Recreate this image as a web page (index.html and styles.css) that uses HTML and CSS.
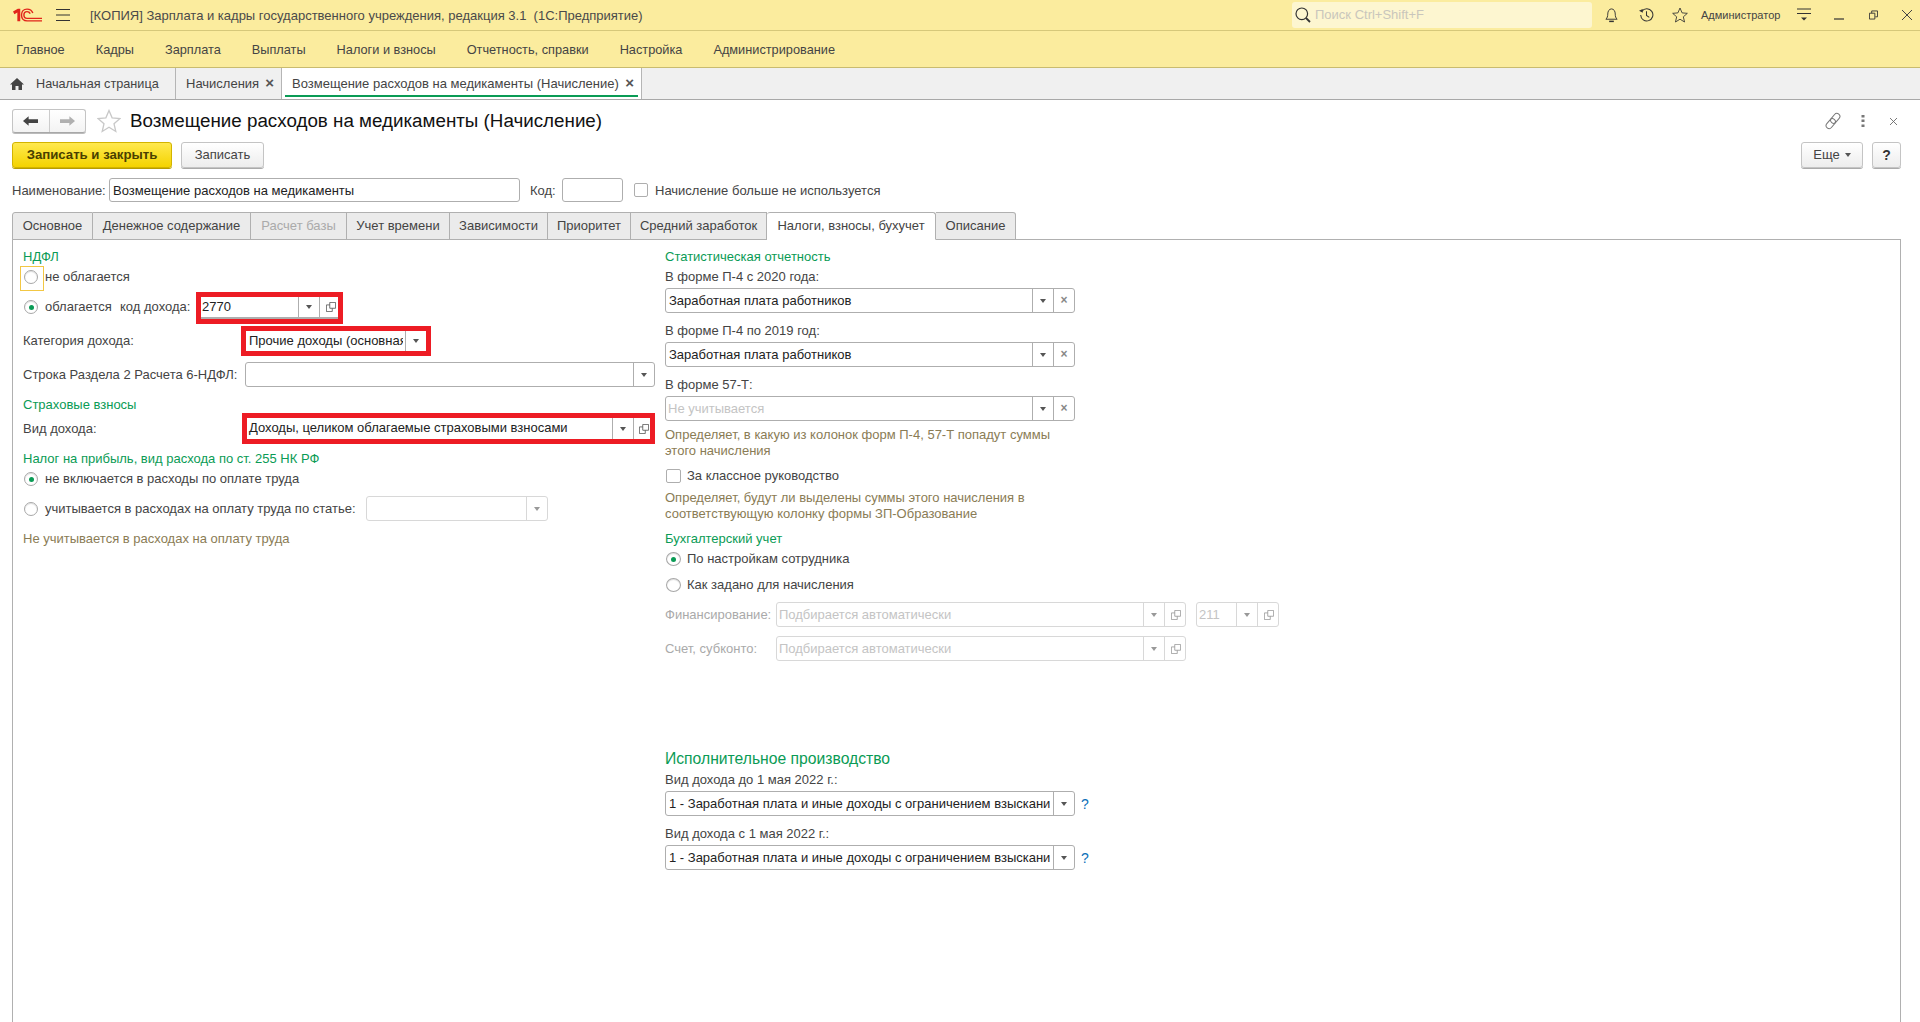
FILE: index.html
```html
<!DOCTYPE html>
<html lang="ru">
<head>
<meta charset="utf-8">
<title>Возмещение расходов на медикаменты</title>
<link rel="stylesheet" href="styles.css">
</head>
<body>
<svg class="defs" aria-hidden="true">
  <symbol id="i-open" viewBox="0 0 12 12"><path d="M4.500 .5h7v7h-7zM4.500 3.500h-4v8h7v-4" fill="none" stroke="currentColor"/></symbol>
  <symbol id="i-star" viewBox="0 0 24 24"><path d="M12 1.500l3.100 7.300 7.900.7-6 5.200 1.800 7.800L12 18.300 5.200 22.500l1.800-7.800-6-5.200 7.900-.7z" fill="none" stroke="currentColor" stroke-width="1.300"/></symbol>
</svg>
<div class="app">
  <header class="titlebar">
    <svg class="logo" viewBox="0 0 30 14"><path d="M0 3.500L5 .5h2.500V13.500H4.500V4.500L1.500 6.300z" fill="#e1251b"/><path d="M20.500 5C19.500 2.300 17 .9 14.500 .9 11 .9 8.800 3.600 8.800 7s2.200 6.100 5.700 6.100H30M17.800 5.600C17.200 4.300 16 3.500 14.500 3.500 12.500 3.500 11.300 5 11.300 7s1.200 3.500 3.200 3.500H30" fill="none" stroke="#e1251b" stroke-width="1.500"/></svg>
    <svg class="burger" viewBox="0 0 14 12"><path d="M0 .5h14M0 6h14M0 11.500h14" stroke="#333" fill="none"/></svg>
    <div class="app-title">[КОПИЯ] Зарплата и кадры государственного учреждения, редакция 3.1&nbsp; (1С:Предприятие)</div>
    <div class="search">
      <svg class="search-ico" viewBox="0 0 16 16"><circle cx="6.800" cy="6.800" r="5.800" fill="none" stroke="#333" stroke-width="1.200"/><path d="M11 11l4 4" stroke="#333" stroke-width="1.800"/></svg>
      <span>Поиск Ctrl+Shift+F</span>
    </div>
    <svg class="top-ico bell" viewBox="0 0 16 16"><path d="M2 12.500h12c-1.500-1.500-2-3-2-5.500 0-3-1.500-5.500-4-5.500S4 4 4 7c0 2.500-.5 4-2 5.500z" fill="none" stroke="#333"/><path d="M5.500 14.800h5" stroke="#333" stroke-width="1.600"/></svg>
    <svg class="top-ico hist" viewBox="0 0 16 16"><path d="M3.200 3.800A6.500 6.500 0 1 1 1.800 8" fill="none" stroke="#333" stroke-width="1.100"/><path d="M0 3.500L4 1.500 4 5.500z" fill="#333"/><path d="M8 4v4.500l3 2" fill="none" stroke="#333" stroke-width="1.100"/></svg>
    <svg class="top-ico star"><use href="#i-star"/></svg>
    <div class="user">Администратор</div>
    <svg class="win-menu" viewBox="0 0 14 14"><path d="M0 1h14M0 5.500h14" stroke="#333"/><path d="M4 9.500h6l-3 3z" fill="#333"/></svg>
    <svg class="win-min" viewBox="0 0 10 10"><path d="M0 9h10" stroke="#333" stroke-width="1.200"/></svg>
    <svg class="win-rest" viewBox="0 0 10 10"><path d="M.5 3h6v6.500h-6zM3 3V.5h6.500v6.500H7" fill="none" stroke="#333"/></svg>
    <svg class="win-close" viewBox="0 0 10 10"><path d="M0 0l10 10M10 0L0 10" stroke="#444" stroke-width="1"/></svg>
  </header>
  <nav class="menu">
    <span>Главное</span><span>Кадры</span><span>Зарплата</span><span>Выплаты</span><span>Налоги и взносы</span><span>Отчетность, справки</span><span>Настройка</span><span>Администрирование</span>
  </nav>
  <div class="opentabs">
    <div class="otab home"><svg class="house" viewBox="0 0 14 12"><path d="M7 0L0 6.500h2V12h3.500V8h3v4H12V6.500h2z" fill="#444"/></svg><span>Начальная страница</span></div>
    <div class="otab list"><span>Начисления</span><b class="otab-x">×</b></div>
    <div class="otab current"><span>Возмещение расходов на медикаменты (Начисление)</span><b class="otab-x">×</b></div>
  </div>
  <main class="form">
    <div class="form-head">
      <div class="navgroup">
        <div class="nav-btn"><svg viewBox="0 0 16 10"><path d="M0 5l6-5v3h10v4H6v3z" fill="#444"/></svg></div>
        <div class="nav-btn"><svg viewBox="0 0 16 10"><path d="M16 5l-6-5v3H0v4h10v3z" fill="#b0b0b0"/></svg></div>
      </div>
      <svg class="fav"><use href="#i-star"/></svg>
      <h1>Возмещение расходов на медикаменты (Начисление)</h1>
      <svg class="head-ico link" viewBox="0 0 18 18"><g transform="rotate(-50 9 9)" fill="none" stroke="#777"><rect x="0" y="6" width="11" height="6" rx="3"/><rect x="7" y="6" width="11" height="6" rx="3"/></g></svg>
      <svg class="head-ico dots" viewBox="0 0 4 14"><path d="M.5 1h3v2.500h-3zM.5 5.500h3V8h-3zM.5 10.500h3V13h-3z" fill="#777"/></svg>
      <svg class="head-ico cross" viewBox="0 0 8 8"><path d="M0 0l8 8M8 0L0 8" stroke="#666"/></svg>
    </div>
    <div class="toolbar">
      <button class="btn primary">Записать и закрыть</button>
      <button class="btn save">Записать</button>
      <button class="btn more">Еще<i class="caret"></i></button>
      <button class="btn help">?</button>
    </div>
    <div class="namerow">
      <span class="lbl l-name">Наименование:</span>
      <div class="field f-name"><div class="val">Возмещение расходов на медикаменты</div></div>
      <span class="lbl l-code">Код:</span>
      <div class="field f-code"><div class="val"></div></div>
      <span class="check"></span>
      <span class="lbl">Начисление больше не используется</span>
    </div>
    <div class="tabs">
      <div class="tab t1">Основное</div>
      <div class="tab t2">Денежное содержание</div>
      <div class="tab t3 off">Расчет базы</div>
      <div class="tab t4">Учет времени</div>
      <div class="tab t5">Зависимости</div>
      <div class="tab t6">Приоритет</div>
      <div class="tab t7">Средний заработок</div>
      <div class="tab t8 on">Налоги, взносы, бухучет</div>
      <div class="tab t9">Описание</div>
    </div>
    <section class="panel">
      <div class="col-left">
        <div class="head">НДФЛ</div>
        <div class="row r-no"><span class="radio focus"></span><span class="lbl">не облагается</span></div>
        <div class="row r-yes">
          <span class="radio sel"></span><span class="lbl l-obl">облагается</span><span class="lbl l-kod">код дохода:</span>
          <div class="redbox rb1"><div class="field plain underline"><div class="val v0">2770</div><div class="fbtn"><i class="caret"></i></div><div class="fbtn"><svg class="open"><use href="#i-open"/></svg></div></div></div>
        </div>
        <div class="row r-cat">
          <span class="lbl l-cat">Категория дохода:</span>
          <div class="redbox rb2"><div class="field plain"><div class="val v1">Прочие доходы (основная налоговая база)</div><div class="fbtn"><i class="caret"></i></div></div></div>
        </div>
        <div class="row r-str">
          <span class="lbl l-str">Строка Раздела 2 Расчета 6-НДФЛ:</span>
          <div class="field f-str"><div class="val"></div><div class="fbtn"><i class="caret"></i></div></div>
        </div>
        <div class="head h-ins">Страховые взносы</div>
        <div class="row r-vid">
          <span class="lbl l-vid">Вид дохода:</span>
          <div class="redbox rb3"><div class="field plain"><div class="val v1">Доходы, целиком облагаемые страховыми взносами</div><div class="fbtn"><i class="caret"></i></div><div class="fbtn"><svg class="open"><use href="#i-open"/></svg></div></div></div>
        </div>
        <div class="head h-tax">Налог на прибыль, вид расхода по ст. 255 НК РФ</div>
        <div class="row r-inc"><span class="radio sel"></span><span class="lbl">не включается в расходы по оплате труда</span></div>
        <div class="row r-art">
          <span class="radio"></span><span class="lbl l-art">учитывается в расходах на оплату труда по статье:</span>
          <div class="field dis f-art"><div class="val"></div><div class="fbtn"><i class="caret"></i></div></div>
        </div>
        <div class="hint h-note">Не учитывается в расходах на оплату труда</div>
      </div>
      <div class="col-right">
        <div class="head">Статистическая отчетность</div>
        <div class="flabel first">В форме П-4 с 2020 года:</div>
        <div class="field wide"><div class="val">Заработная плата работников</div><div class="fbtn"><i class="caret"></i></div><div class="fbtn x">×</div></div>
        <div class="flabel">В форме П-4 по 2019 год:</div>
        <div class="field wide"><div class="val">Заработная плата работников</div><div class="fbtn"><i class="caret"></i></div><div class="fbtn x">×</div></div>
        <div class="flabel">В форме 57-Т:</div>
        <div class="field wide"><div class="val ph">Не учитывается</div><div class="fbtn"><i class="caret"></i></div><div class="fbtn x">×</div></div>
        <div class="hint h1">Определяет, в какую из колонок форм П-4, 57-Т попадут суммы<br>этого начисления</div>
        <div class="row r-class"><span class="check c2"></span><span class="lbl">За классное руководство</span></div>
        <div class="hint h2">Определяет, будут ли выделены суммы этого начисления в<br>соответствующую колонку формы ЗП-Образование</div>
        <div class="head h-acc">Бухгалтерский учет</div>
        <div class="row r-acc1"><span class="radio r2 sel"></span><span class="lbl">По настройкам сотрудника</span></div>
        <div class="row r-acc2"><span class="radio r2"></span><span class="lbl">Как задано для начисления</span></div>
        <div class="row r-fin">
          <span class="lbl off l-fin">Финансирование:</span>
          <div class="field dis f-fin"><div class="val ph">Подбирается автоматически</div><div class="fbtn"><i class="caret"></i></div><div class="fbtn"><svg class="open"><use href="#i-open"/></svg></div></div>
          <div class="field dis f-211"><div class="val ph">211</div><div class="fbtn"><i class="caret"></i></div><div class="fbtn"><svg class="open"><use href="#i-open"/></svg></div></div>
        </div>
        <div class="row r-sch">
          <span class="lbl off l-fin">Счет, субконто:</span>
          <div class="field dis f-fin"><div class="val ph">Подбирается автоматически</div><div class="fbtn"><i class="caret"></i></div><div class="fbtn"><svg class="open"><use href="#i-open"/></svg></div></div>
        </div>
        <div class="bighead">Исполнительное производство</div>
        <div class="flabel after-big">Вид дохода до 1 мая 2022 г.:</div>
        <div class="row r-q">
          <div class="field wide"><div class="val v2">1 - Заработная плата и иные доходы с ограничением взыскания</div><div class="fbtn"><i class="caret"></i></div></div>
          <span class="q">?</span>
        </div>
        <div class="flabel">Вид дохода с 1 мая 2022 г.:</div>
        <div class="row r-q">
          <div class="field wide"><div class="val v2">1 - Заработная плата и иные доходы с ограничением взыскания</div><div class="fbtn"><i class="caret"></i></div></div>
          <span class="q">?</span>
        </div>
      </div>
    </section>
  </main>
</div>
</body>
</html>
```

FILE: styles.css
```css
* { box-sizing: border-box; }
html, body { margin: 0; height: 100%; overflow: hidden; background: #fff; }
body { font: 13px/16px "Liberation Sans", Arial, sans-serif; color: #444; }
.defs { position: absolute; width: 0; height: 0; }
.app { display: flex; flex-direction: column; height: 1022px; }

.titlebar { flex: none; height: 31px; display: flex; align-items: center; background: #fbec9e; border-bottom: 1px solid #d6c87a; }
.logo { width: 29px; height: 14px; margin-left: 13px; flex: none; }
.burger { width: 14px; height: 12px; margin-left: 14px; flex: none; }
.app-title { margin-left: 20px; padding-top: 2px; color: #4a4a4a; white-space: nowrap; flex: none; width: 1202px; }
.search { width: 300px; height: 26px; flex: none; background: #fdf6d0; border-radius: 3px; display: flex; align-items: center; color: #c9c6bc; }
.search-ico { width: 16px; height: 16px; margin: 0 4px 0 3px; }
.top-ico { flex: none; width: 15px; height: 16px; color: #333; }
.bell { margin-left: 12px; }
.hist { margin-left: 20px; }
.star { margin-left: 18px; width: 16px; }
.user { margin-left: 13px; font-size: 11px; color: #444; flex: none; width: 84px; white-space: nowrap; }
.win-menu { width: 14px; height: 14px; margin-left: 12px; flex: none; }
.win-min { width: 10px; height: 10px; margin-left: 23px; flex: none; }
.win-rest { width: 9px; height: 10px; margin-left: 25px; flex: none; }
.win-close { width: 10px; height: 10px; margin-left: 24px; flex: none; }

.menu { flex: none; height: 37px; display: flex; align-items: center; gap: 31px; padding: 2px 0 0 16px; background: #fbec9e; border-bottom: 1px solid #c9bb6f; color: #444; font-size: 12.75px; }

.opentabs { flex: none; height: 32px; display: flex; background: #f0f0f0; border-bottom: 1px solid #a8a8a8; }
.otab { height: 31px; display: flex; align-items: center; border-right: 1px solid #b5b5b5; white-space: nowrap; position: relative; flex: none; }
.home { width: 176px; padding-left: 10px; font-size: 12.7px; }
.house { width: 14px; height: 12px; margin-right: 12px; }
.list { width: 106px; padding-left: 10px; }
.current { width: 360px; padding-left: 10px; background: #fff; }
.current::after { content: ""; position: absolute; left: 3px; right: 3px; bottom: 2px; height: 2px; background: #0a9b55; }
.otab-x { position: absolute; right: 7px; top: 7px; font-size: 15px; color: #555; }

.form { flex: 1; display: flex; flex-direction: column; padding: 0 19px 0 12px; min-height: 0; }
.form-head { flex: none; height: 33px; padding-top: 9px; display: flex; align-items: center; }
.navgroup { display: flex; width: 74px; height: 24px; border: 1px solid #c4c4c4; border-bottom-color: #a8a8a8; border-radius: 3px; background: linear-gradient(#fff, #f3f3f3); box-shadow: 0 1px 0 #bbb; flex: none; }
.nav-btn { flex: 1; display: flex; align-items: center; justify-content: center; }
.nav-btn + .nav-btn { border-left: 1px solid #ccc; }
.nav-btn svg { width: 15px; height: 10px; }
.fav { width: 24px; height: 24px; margin-left: 11px; color: #c8c8c8; flex: none; }
h1 { margin: 0 0 0 9px; font: 18.8px/24px "Liberation Sans", Arial, sans-serif; color: #111; flex: 1; white-space: nowrap; }
.head-ico { flex: none; }
.link { width: 18px; height: 18px; }
.dots { width: 4px; height: 14px; margin-left: 19px; }
.cross { width: 7px; height: 7px; margin: 0 4px 0 25px; }

.toolbar { flex: none; height: 26px; margin-top: 9px; display: flex; }
.btn { font: inherit; height: 26px; padding: 0; border: 1px solid #c4c4c4; border-radius: 3px; background: linear-gradient(#fff, #ededed); box-shadow: 0 1px 0 #aaa; color: #444; }
.primary { width: 160px; background: linear-gradient(#ffe94f, #f4d300); border-color: #d3b400; box-shadow: 0 1px 0 #b79c00; font-weight: 700; font-size: 13.2px; color: #4a3f00; }
.save { width: 83px; margin-left: 9px; }
.more { width: 62px; margin-left: auto; display: flex; align-items: center; justify-content: center; gap: 5px; }
.help { width: 29px; margin-left: 9px; font-weight: 700; color: #333; font-size: 14px; }
.caret { display: inline-block; width: 0; height: 0; border: 3px solid transparent; border-top: 4px solid #555; border-bottom: 0; }

.namerow { flex: none; height: 24px; margin-top: 10px; display: flex; align-items: center; }
.lbl { white-space: nowrap; flex: none; }
.l-name { width: 97px; }
.namerow .lbl { padding-top: 1px; }
.field { display: flex; height: 25px; border: 1px solid #aeaeae; border-radius: 3px; background: #fff; flex: none; color: #222; }
.val { flex: 1; min-width: 0; overflow: hidden; white-space: nowrap; line-height: 24px; padding-left: 3px; }
.fbtn { width: 21px; flex: none; border-left: 1px solid #aeaeae; display: flex; align-items: center; justify-content: center; color: #555; }
.open { width: 10px; height: 10px; margin-left: 3px; color: #555; }
.x { font-size: 12px; color: #888; padding-bottom: 2px; font-weight: 700; }
.f-name { width: 411px; height: 24px; }
.l-code { margin-left: 10px; width: 32px; }
.f-code { width: 61px; height: 24px; }
.check { width: 14px; height: 14px; border: 1px solid #aeaeae; border-radius: 2px; background: #fff; flex: none; margin: 0 7px 0 11px; }

.tabs { flex: none; height: 28px; margin-top: 10px; display: flex; position: relative; z-index: 1; }
.tab { height: 28px; flex: none; display: flex; align-items: center; justify-content: center; background: #ebebeb; border: 1px solid #b0b0b0; border-left: 0; white-space: nowrap; }
.t1 { width: 81px; border-left: 1px solid #b0b0b0; border-radius: 3px 0 0 0; }
.t2 { width: 158px; }
.t3 { width: 96px; color: #aaa; }
.t4 { width: 103px; }
.t5 { width: 98px; }
.t6 { width: 83px; }
.t7 { width: 136px; }
.t8 { width: 169px; background: #fff; border-bottom-color: #fff; border-radius: 3px 3px 0 0; }
.t9 { width: 80px; border-radius: 0 3px 0 0; }

.panel { flex: 1; min-height: 0; margin-top: -1px; border: 1px solid #b0b0b0; border-bottom: 0; display: grid; grid-template-columns: 642px 1fr; padding: 9px 0 0 10px; align-content: start; }
.col-left, .col-right { display: flex; flex-direction: column; }
.row { display: flex; align-items: center; flex: none; }
.head { height: 15px; line-height: 15px; color: #0a9b55; flex: none; white-space: nowrap; }
.bighead { height: 18px; line-height: 18px; font-size: 15.7px; color: #0a9b55; margin-top: 89px; flex: none; }
.hint { color: #8a7c55; flex: none; }

.radio { width: 14px; height: 14px; border: 1px solid #a8a8a8; border-radius: 50%; background: #fff; flex: none; margin: 0 7px 0 1px; position: relative; display: flex; align-items: center; justify-content: center; box-shadow: inset 0 1px 1px #ddd; }
.radio.sel::before { content: ""; width: 5px; height: 5px; border-radius: 50%; background: #0a9b55; }
.radio.focus::after { content: ""; position: absolute; left: -5px; top: -5px; width: 22px; height: 23px; border: 1px solid #f2c744; }
.r2 { margin: 0 6px 0 1px; width: 15px; }

.redbox { border: 5px solid #ed1c24; flex: none; background: #fff; display: flex; }
.field.plain { border: 0; border-radius: 0; height: auto; flex: 1; min-width: 0; }
.underline { border-bottom: 2px solid #aeaeae !important; }
.v0 { padding-left: 1px; line-height: 20px; }
.v1 { margin-right: 2px; line-height: 20px; }
.v2 { margin-right: 3px; }
.rb3 .v1 { padding-left: 2px; }
.r-no { height: 23px; margin-top: 1px; }
.r-yes { height: 32px; margin-top: 4px; }
.r-yes .radio, .r-yes .lbl { margin-bottom: 2px; }
.l-obl { width: 65px; }
.l-kod { margin-left: 10px; width: 76px; }
.rb1 { width: 147px; height: 32px; }
.rb2 { width: 190px; height: 30px; }
.rb3 { width: 413px; height: 31px; }
.rb3 .fbtn + .fbtn { width: 17px; }
.rb1 .fbtn + .fbtn { width: 19px; }
.r-cat { height: 30px; margin-top: 2px; }
.l-cat { width: 218px; }
.r-str { height: 25px; margin-top: 6px; }
.l-str { width: 222px; }
.f-str { width: 410px; }
.h-ins { margin-top: 10px; margin-bottom: 1px; }
.r-vid { height: 31px; }
.l-vid { width: 219px; }
.h-tax { margin-top: 7px; }
.r-inc { height: 22px; margin-top: 2px; }
.r-art { height: 25px; margin-top: 6px; }
.l-art { width: 321px; }
.f-art { width: 182px; }
.h-note { margin-top: 10px; }

.flabel { height: 16px; margin: 10px 0 3px; flex: none; white-space: nowrap; }
.flabel.first { margin: 5px 0 3px; }
.flabel.after-big { margin: 4px 0 3px; }
.wide { width: 410px; }
.ph { color: #c4c4c4; padding-left: 2px; }
.h1 { margin-top: 6px; }
.r-class { height: 18px; margin-top: 8px; }
.c2 { margin: 0 6px 0 1px; width: 15px; }
.h2 { margin-top: 5px; }
.h-acc { margin-top: 9px; }
.r-acc1 { height: 22px; margin-top: 2px; }
.r-acc2 { height: 22px; margin-top: 4px; }
.r-fin { height: 25px; margin-top: 6px; }
.r-sch { height: 25px; margin-top: 9px; }
.lbl.off { color: #aaa; }
.l-fin { width: 111px; }
.dis { border-color: #d8d8d8; }
.dis .fbtn { border-left-color: #d8d8d8; color: #999; }
.dis .open { color: #999; margin-left: 2px; }
.dis .caret { border-top-color: #999; }
.f-fin { width: 410px; }
.f-211 { width: 83px; margin-left: 10px; }
.q { margin-left: 6px; color: #0b6fb8; font-size: 14px; }
.r-q { height: 25px; }
```
